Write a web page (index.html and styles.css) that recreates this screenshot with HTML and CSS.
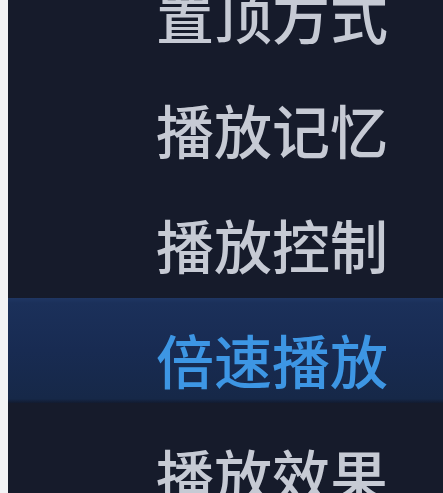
FILE: index.html
```html
<!DOCTYPE html>
<html lang="zh-CN">
<head>
<meta charset="utf-8">
<link rel="stylesheet" href="styles.css">
</head>
<body>
<div class="frame">
  <ul class="menu">
    <li class="item"><span class="label">置顶方式</span></li>
    <li class="item"><span class="label">播放记忆</span></li>
    <li class="item"><span class="label">播放控制</span></li>
    <li class="item active"><span class="label">倍速播放</span></li>
    <li class="item"><span class="label">播放效果</span></li>
  </ul>
</div>
</body>
</html>
```
FILE: styles.css
```css
html, body {
  margin: 0;
  padding: 0;
  height: 100%;
  overflow: hidden;
}
body {
  background: #f2f3f5;
  font-family: "Noto Sans CJK SC", "Noto Sans", sans-serif;
}
.frame {
  margin-left: 8px;
  height: 100%;
  background: #161b2b;
  overflow: hidden;
}
.menu {
  list-style: none;
  margin: -47px 0 0 0;
  padding: 0;
  display: flex;
  flex-direction: column;
}
.item {
  height: 115px;
  box-sizing: border-box;
  padding-bottom: 10px;
  display: flex;
}
.label {
  flex: 1;
  display: flex;
  align-items: center;
  padding-left: 148px;
  padding-top: 16px;
  font-size: 58px;
  font-weight: 500;
  line-height: 1;
  color: #c6cad4;
}
.item.active .label {
  background: linear-gradient(#1f3663 0, #1b305a 5px, #182b52 50%, #162848 96%, #121b30 100%);
  color: #3d96e4;
}
```
